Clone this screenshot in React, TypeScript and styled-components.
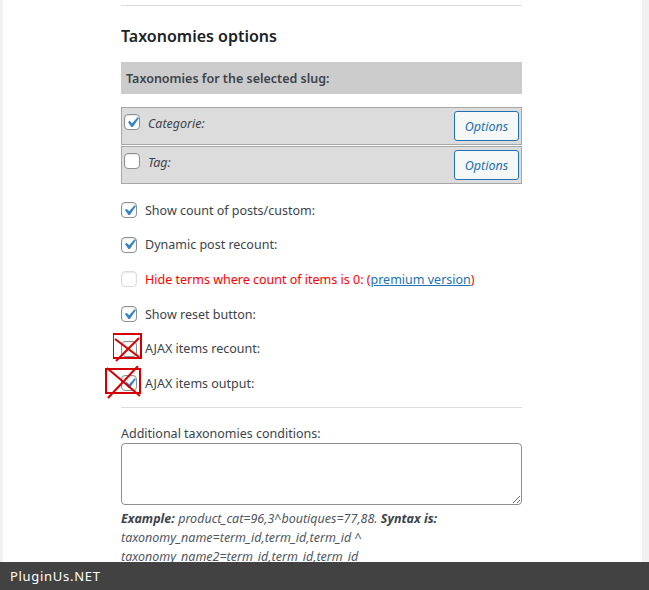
import React from "react";
import styled, { createGlobalStyle } from "styled-components";

const Global = createGlobalStyle`
  html, body { margin: 0; padding: 0; background: #f1f1f1; }
  body { font-family: "Noto Sans", "Open Sans", sans-serif; font-size: 12.5px; color: #3c434a; }
  * { box-sizing: border-box; }
`;

const Page = styled.div`
  display: flex;
  width: 649px;
  height: 590px;
  overflow: hidden;
  background: #f1f1f1;
`;

const Panel = styled.div`
  margin-left: 3px;
  width: 639px;
  height: 590px;
  background: #fff;
  padding: 5px 120px 0 118px;
  overflow: hidden;
`;

const Rule = styled.div<{ $top?: number }>`
  height: 1px;
  background: #dcdcde;
  margin-top: ${(p) => p.$top ?? 0}px;
`;

const Heading = styled.h2`
  margin: 19px 0 0;
  font-size: 16px;
  font-weight: 600;
  line-height: 22px;
  color: #1d2327;
`;

const GrayBar = styled.div`
  margin-top: 15px;
  height: 32px;
  background: #cccccc;
  display: flex;
  align-items: center;
  padding-left: 5px;
  font-weight: 600;
  color: #3c434a;
`;

const TaxList = styled.div`
  margin-top: 13px;
  display: flex;
  flex-direction: column;
  gap: 1px;
`;

const TaxRow = styled.div`
  height: 38px;
  background: #dcdcdc;
  border: 1px solid #a7a7a7;
  display: flex;
  align-items: flex-start;
  padding: 3px 2px 0 2px;
`;

const TaxLabel = styled.span`
  font-style: italic;
  margin-left: 8px;
  margin-top: 4px;
  line-height: 18px;
  flex: 1;
  color: #3c434a;
`;

const OptionsButton = styled.button`
  width: 65px;
  height: 30px;
  border: 1px solid #2271b1;
  border-radius: 3px;
  background: #f6f7f7;
  color: #2271b1;
  font-family: inherit;
  font-size: 12.5px;
  font-style: italic;
  padding: 0;
  cursor: pointer;
`;

const Box = styled.span<{ $disabled?: boolean; $top?: number }>`
  width: 16px;
  height: 16px;
  flex: none;
  border: 1px solid ${(p) => (p.$disabled ? "#dcdcde" : "#8c8f94")};
  border-radius: 4px;
  background: #fff;
  display: inline-flex;
  align-items: center;
  justify-content: center;
  margin-top: ${(p) => p.$top ?? 0}px;
  position: relative;
  box-shadow: inset 0 1px 2px rgba(0, 0, 0, 0.1);
  svg { flex: none; margin: -3px; }
`;

const OptionList = styled.div`
  margin-top: 9px;
  display: flex;
  flex-direction: column;
`;

const OptionRow = styled.div`
  height: 34.6px;
  display: flex;
  align-items: center;
  gap: 8px;
  position: relative;
`;

const Danger = styled.span`
  color: #ff0000;
`;

const Link = styled.a`
  color: #2271b1;
  text-decoration: underline;
`;

const Cross = styled.svg`
  position: absolute;
  pointer-events: none;
`;

const FieldLabel = styled.div`
  margin-top: 17px;
  line-height: 18px;
`;

const TextArea = styled.textarea`
  display: block;
  width: 401px;
  height: 62px;
  border: 1px solid #8c8f94;
  border-radius: 4px;
  resize: vertical;
  font-family: inherit;
`;

const Hint = styled.p`
  margin: 4px 0 0;
  font-style: italic;
  line-height: 19px;
  color: #50575e;
  b { font-weight: 700; color: #3c434a; }
`;

const Footer = styled.div`
  position: fixed;
  left: 0;
  bottom: 0;
  width: 649px;
  height: 28px;
  background: #424242;
  color: #fff;
  display: flex;
  align-items: center;
  padding-left: 10px;
  font-size: 13px;
  letter-spacing: 0.7px;
`;

const Check = () => (
  <svg width="21" height="21" viewBox="0 0 20 20">
    <path d="M14.83 4.89l1.34.94-5.81 8.38H9.02L5.78 9.67l1.34-1.25 2.57 2.4z" fill="#3582c4" />
  </svg>
);

const CheckBox = ({ checked, disabled, top }: { checked?: boolean; disabled?: boolean; top?: number }) => (
  <Box $disabled={disabled} $top={top}>{checked && <Check />}</Box>
);

export default function App() {
  return (
    <>
      <Global />
      <Page>
        <Panel>
          <Rule />
          <Heading>Taxonomies options</Heading>
          <GrayBar>Taxonomies for the selected slug:</GrayBar>
          <TaxList>
            <TaxRow>
              <CheckBox checked top={3} />
              <TaxLabel>Categorie:</TaxLabel>
              <OptionsButton>Options</OptionsButton>
            </TaxRow>
            <TaxRow>
              <CheckBox top={3} />
              <TaxLabel>Tag:</TaxLabel>
              <OptionsButton>Options</OptionsButton>
            </TaxRow>
          </TaxList>
          <OptionList>
            <OptionRow>
              <CheckBox checked />
              <span>Show count of posts/custom:</span>
            </OptionRow>
            <OptionRow>
              <CheckBox checked />
              <span>Dynamic post recount:</span>
            </OptionRow>
            <OptionRow>
              <CheckBox disabled />
              <Danger>
                Hide terms where count of items is 0: (<Link href="#">premium version</Link>)
              </Danger>
            </OptionRow>
            <OptionRow>
              <CheckBox checked />
              <span>Show reset button:</span>
            </OptionRow>
            <OptionRow>
              <CheckBox />
              <span>AJAX items recount:</span>
              <Cross width="32" height="30" viewBox="0 0 32 30" style={{ left: -8, top: 2 }}>
                <rect x="0" y="1" width="28" height="24" fill="none" stroke="#d40000" strokeWidth="2" />
                <line x1="2" y1="6" x2="26" y2="24" stroke="#d40000" strokeWidth="2" />
                <line x1="26" y1="5" x2="3" y2="28" stroke="#d40000" strokeWidth="2" />
              </Cross>
            </OptionRow>
            <OptionRow>
              <CheckBox checked />
              <span>AJAX items output:</span>
              <Cross width="40" height="36" viewBox="0 0 40 36" style={{ left: -16, top: 0 }}>
                <rect x="1" y="3" width="34" height="24" fill="none" stroke="#d40000" strokeWidth="2" />
                <line x1="2" y1="2" x2="35" y2="30" stroke="#d40000" strokeWidth="2" />
                <line x1="33" y1="0" x2="3" y2="32" stroke="#d40000" strokeWidth="2" />
              </Cross>
            </OptionRow>
          </OptionList>
          <Rule $top={6} />
          <FieldLabel>Additional taxonomies conditions:</FieldLabel>
          <TextArea />
          <Hint>
            <b>Example:</b> product_cat=96,3^boutiques=77,88. <b>Syntax is:</b>
            <br />
            taxonomy_name=term_id,term_id,term_id ^
            <br />
            taxonomy_name2=term_id,term_id,term_id
          </Hint>
        </Panel>
      </Page>
      <Footer>PluginUs.NET</Footer>
    </>
  );
}
